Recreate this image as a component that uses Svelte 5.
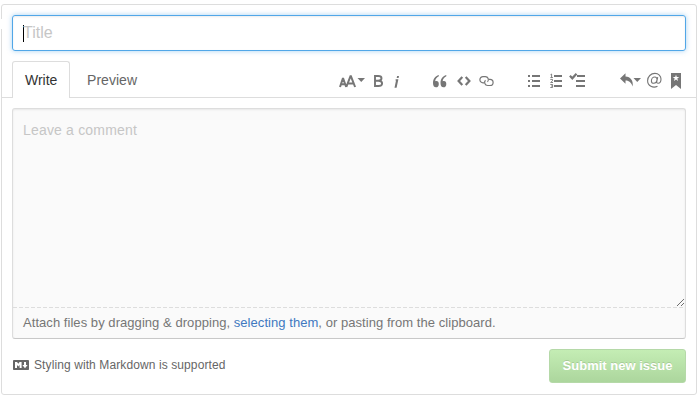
<script>
  const attachBefore = 'Attach files by dragging & dropping, ';
  const attachAfter = ', or pasting from the clipboard.';
</script>

<div class="panel">
  <span class="notch"></span>
  <div class="title"><i class="cursor"></i><span>Title</span></div>

  <div class="head">
    <div class="tabs">
      <div class="tab active">Write</div>
      <div class="tab">Preview</div>
    </div>
    <div class="toolbar">
      <div class="group">
        <svg width="27" height="18" viewBox="0 0 27 18">
          <path class="line" d="M1 15 4 6 7.200 15M2 12.300h4M7.300 15 11.700 3.600 16.100 15M9 11.500h5.500" stroke-width="2" stroke-linejoin="bevel" />
          <path d="M18.500 6h7.500l-3.750 4z" />
        </svg>
        <svg class="bold" width="9" height="18" viewBox="0 0 9 18">
          <path class="line" d="M1 4v10h3.500c2.500 0 3.600-.9 3.600-2.600S7 8.700 4.500 8.700H1h3.200c2.200 0 3.300-.8 3.300-2.400S6.400 4 4.200 4z" stroke-width="1.900" />
        </svg>
        <svg class="italic" width="5" height="18" viewBox="0 0 5 18">
          <path d="M3.100 4h1.900l-.4 2H2.700zM1.700 7.300h2.700L2.600 15.800H.5l1.500-7.200H1.400z" />
        </svg>
      </div>
      <div class="group">
        <svg width="14" height="18" viewBox="0 0 14 18">
          <path d="M5.800 3v1.300C3.500 5.500 2.300 7.200 2.200 9.300c.4-.3.800-.4 1.300-.4 1.500 0 2.300 1.100 2.300 3 0 2.200-1.100 3.400-2.800 3.400C1 15.300 0 13.500 0 10.900 0 7.100 2 4.100 5.800 3zM13.300 3v1.300c-2.300 1.200-3.500 2.900-3.600 5 .4-.3.800-.4 1.300-.4 1.500 0 2.300 1.100 2.300 3 0 2.200-1.100 3.400-2.800 3.400-2 0-3-1.800-3-4.400C7.500 7.100 9.500 4.100 13.300 3z" />
        </svg>
        <svg class="code" width="14" height="18" viewBox="0 0 14 18">
          <path class="line" d="M5.300 5 1.600 9l3.700 4M8.700 5 12.400 9l-3.700 4" stroke-width="2.200" />
        </svg>
        <svg class="link" width="15" height="18" viewBox="0 0 15 18">
          <path class="line" d="M5 10.800H4A3.100 3.100 0 0 1 4 4.600h2.300a3.100 3.100 0 0 1 2.200 5.300M10 7.300h1a3.100 3.100 0 0 1 0 6.200H8.700a3.100 3.100 0 0 1-2.200-5.300" stroke-width="1.200" />
        </svg>
      </div>
      <div class="group">
        <svg width="13" height="18" viewBox="0 0 13 18">
          <path d="M0 3h2v2H0zM4 3h8v2H4zM0 8h2v2H0zM4 8h8v2H4zM0 13h2v2H0zM4 13h8v2H4z" />
        </svg>
        <svg class="ordered" width="13" height="18" viewBox="0 0 13 18">
          <path d="M4 3h8v2H4zM4 8h8v2H4zM4 13h8v2H4z" />
          <path class="line" d="M.5 2.700 1.600 2v3.500M.4 5.500h2.500M.3 7.400H2.500v1.400L.6 10.500h2.400M.3 12.500h2.300v3H.3M1 14h1.600" stroke-width=".9" />
        </svg>
        <svg class="tasks" width="17" height="18" viewBox="0 0 17 18">
          <path d="M8 3h8v2H8zM7 8h9v2H7zM7 13h9v2H7z" />
          <path class="line" d="M.9 3.800 3.300 6.300 7.500 1.700" stroke-width="2.200" />
        </svg>
      </div>
      <div class="group">
        <svg width="22" height="18" viewBox="0 0 22 18">
          <path d="M5.500 1.200 0 6.500l5.500 5.300V8.600c3 0 5.300 1.300 7.200 5.900C13.500 8.500 10.600 4.600 5.500 4.400zM13.500 6h7.500l-3.750 4z" />
        </svg>
        <svg class="mention" width="15" height="18" viewBox="0 0 15 18">
          <path class="line" d="M10.500 14.300C6 16.500.6 13.900.6 8.800.6 4.500 3.900 1.400 7.900 1.400c3.700 0 6.100 2.500 6.100 5.700 0 2.500-1.300 4.200-2.900 4.200-1.300 0-1.500-.8-1.300-1.900l.9-4.300M10 8.200c-.3 2-1.600 3.100-3.200 3.100-1.500 0-2.400-.9-2.400-2.400 0-2.100 1.500-3.900 3.400-3.900 1.500 0 2.400 1.100 2.200 3.200z" stroke-width="1.100" />
        </svg>
        <svg class="bookmark" width="10" height="18" viewBox="0 0 10 18">
          <path fill-rule="evenodd" d="M0 1h10v16l-5-4-5 4zM5 2.700 4.200 5.100H1.700l2 1.500-.8 2.500L5 7.600l2.100 1.500-.8-2.500 2-1.500H5.800z" />
        </svg>
      </div>
    </div>
  </div>

  <div class="comment">
    <div class="field">
      <span>Leave a comment</span>
      <svg class="grip" width="9" height="9" viewBox="0 0 9 9"><path d="M1 8l7-7M5 8l3-3" /></svg>
    </div>
    <div class="attach">{attachBefore}<a href="#files">selecting them</a>{attachAfter}</div>
  </div>

  <div class="footer">
    <div class="markdown">
      <svg width="16" height="10" viewBox="0 0 16 10">
        <rect width="16" height="10" rx=".8" />
        <path class="mark" d="M2 8V2h2l1.300 1.800L6.600 2h2v6h-2V4.900L5.300 6.600 4 4.900V8zM11 2h2v3h1.600L12 8.200 9.400 5H11z" />
      </svg>
      <span>Styling with Markdown is supported</span>
    </div>
    <button>Submit new issue</button>
  </div>
</div>

<style>
  :global(body) { background: #fff; }
  .panel {
    position: relative;
    box-sizing: border-box;
    width: 696px;
    height: 391px;
    margin: 4px 0 0 1px;
    padding-top: 10px;
    border: 1px solid #ddd;
    border-radius: 3px;
    font-family: "Liberation Sans", Arial, sans-serif;
    color: #666;
  }
  .notch { position: absolute; left: -1px; top: 14px; width: 1px; height: 10px; background: #fff; }
  .title {
    box-sizing: border-box;
    display: flex;
    align-items: center;
    height: 36px;
    margin: 0 10px;
    padding-left: 10px;
    border: 1px solid #51a7e8;
    border-radius: 3px;
    box-shadow: inset 0 1px 2px rgba(0,0,0,.075), 0 0 5px rgba(81,167,232,.5);
    font-size: 16px;
    color: #c6c6c6;
  }
  .cursor { width: 1px; height: 17px; margin-right: -1px; background: #000; }
  .head {
    box-sizing: border-box;
    display: flex;
    justify-content: space-between;
    height: 37px;
    margin-top: 10px;
    padding: 0 15px 0 10px;
    border-bottom: 1px solid #ddd;
  }
  .tabs { display: flex; font-size: 14px; }
  .tab { box-sizing: border-box; height: 37px; padding: 0 16px; border: 1px solid transparent; line-height: 36px; letter-spacing: .04px; }
  .active { width: 58px; padding: 0 12px; border-color: #ddd; border-bottom: 0; border-radius: 3px 3px 0 0; background: #fff; color: #333; letter-spacing: 0; }
  .toolbar { display: flex; gap: 34px; padding-top: 11px; }
  .group { display: flex; height: 18px; }
  svg { display: block; flex: none; fill: #767676; }
  .line { fill: none; stroke: #767676; }
  .bold { margin-left: 8px; }
  .italic { margin-left: 11px; }
  .code { margin-left: 10px; }
  .link { margin-left: 8px; }
  .ordered { margin-left: 9px; }
  .tasks { margin-left: 6px; }
  .mention { margin-left: 5px; }
  .bookmark { margin-left: 9px; }
  .comment {
    box-sizing: border-box;
    height: 231px;
    margin: 10px 10px 0;
    border: 1px solid #ddd;
    border-bottom-color: #c8c8c8;
    border-radius: 3px;
    background: #fafafa;
    box-shadow: inset 0 1px 2px rgba(0,0,0,.075);
  }
  .field {
    position: relative;
    box-sizing: border-box;
    height: 199px;
    padding: 12px 10px;
    background: repeating-linear-gradient(90deg, #ddd 0 4px, transparent 4px 6px) left bottom / 100% 1px no-repeat;
    font-size: 14px;
    line-height: 18px;
    letter-spacing: .18px;
    color: #c6c6c6;
  }
  .grip { position: absolute; right: 0; bottom: 1px; }
  .grip path { fill: none; stroke: #444; stroke-width: 1; stroke-dasharray: 1.1 .3; }
  .attach { padding-left: 10px; font-size: 13px; line-height: 30px; letter-spacing: .052px; color: #767676; white-space: pre; }
  a { color: #4078c0; text-decoration: none; }
  .footer { display: flex; justify-content: space-between; margin: 10px 10px 0; }
  .markdown { display: flex; align-items: center; height: 32px; gap: 5px; padding-left: 1px; font-size: 12px; letter-spacing: .1px; }
  .markdown svg { fill: #666; }
  .markdown .mark { fill: #fff; }
  button {
    box-sizing: border-box;
    width: 137px;
    height: 34px;
    padding: 0 0 2px;
    border: 1px solid #b5d9a8;
    border-radius: 3px;
    background: linear-gradient(#c4edb4, #acd69d);
    color: #fff;
    font: bold 13px "Liberation Sans", Arial, sans-serif;
    text-shadow: 0 -1px 0 rgba(0,0,0,.12);
  }
</style>
